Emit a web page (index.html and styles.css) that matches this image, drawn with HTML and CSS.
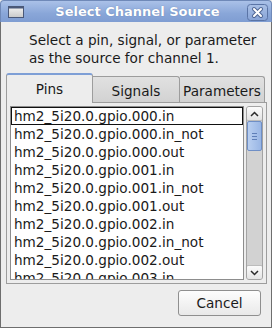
FILE: index.html
```html
<!doctype html>
<html>
<head>
<meta charset="utf-8">
<title>Select Channel Source</title>
<link rel="stylesheet" href="styles.css">
</head>
<body>
<div class="window">
	<div class="titlebar">
		<svg class="win_icon" width="16" height="12" viewBox="0 0 16 12">
			<defs>
				<linearGradient id="ig" x1="0" y1="0" x2="0" y2="1">
					<stop offset="0" stop-color="#f4f4f4"/>
					<stop offset="1" stop-color="#c9c9c9"/>
				</linearGradient>
			</defs>
			<rect x="0.5" y="0.5" width="15" height="11" fill="url(#ig)" stroke="#4a5878"/>
			<rect x="1" y="1" width="14" height="1.5" fill="#4a5878"/>
		</svg>
		<div class="title">Select Channel Source</div>
		<svg class="close" width="21" height="17" viewBox="0 0 21 17">
			<defs>
				<linearGradient id="cg" x1="0" y1="0" x2="0" y2="1">
					<stop offset="0" stop-color="#a9c0e6"/>
					<stop offset="1" stop-color="#87a3d6"/>
				</linearGradient>
			</defs>
			<rect x="0.5" y="0.5" width="20" height="16" rx="3" fill="url(#cg)" stroke="#5a74a6"/>
			<path d="M7 5 L14 12 M14 5 L7 12" stroke="#4f6694" stroke-width="4" stroke-linecap="round"/>
			<path d="M7 5 L14 12 M14 5 L7 12" stroke="#fff" stroke-width="2" stroke-linecap="round"/>
		</svg>
	</div>
	<div class="client">
		<div class="message">Select a pin, signal, or parameter<br>as the source for channel 1.</div>
		<div class="notebook">
			<div class="tabs">
				<div class="tab active">Pins</div>
				<div class="tab">Signals</div>
				<div class="tab">Parameters</div>
			</div>
			<div class="panel">
				<div class="list">
					<ul>
						<li class="focus">hm2_5i20.0.gpio.000.in</li>
						<li>hm2_5i20.0.gpio.000.in_not</li>
						<li>hm2_5i20.0.gpio.000.out</li>
						<li>hm2_5i20.0.gpio.001.in</li>
						<li>hm2_5i20.0.gpio.001.in_not</li>
						<li>hm2_5i20.0.gpio.001.out</li>
						<li>hm2_5i20.0.gpio.002.in</li>
						<li>hm2_5i20.0.gpio.002.in_not</li>
						<li>hm2_5i20.0.gpio.002.out</li>
						<li>hm2_5i20.0.gpio.003.in</li>
					</ul>
				</div>
				<div class="scrollbar">
					<div class="sb_btn">
						<svg width="9" height="6" viewBox="0 0 9 6"><path d="M1 5 L4.5 1.5 L8 5" fill="none" stroke="#2a2a2a" stroke-width="1.5"/></svg>
					</div>
					<div class="trough">
						<div class="thumb"><i></i><i></i><i></i></div>
					</div>
					<div class="sb_btn">
						<svg width="9" height="6" viewBox="0 0 9 6"><path d="M1 1 L4.5 4.5 L8 1" fill="none" stroke="#2a2a2a" stroke-width="1.5"/></svg>
					</div>
				</div>
			</div>
		</div>
		<div class="actions">
			<button class="btn">Cancel</button>
		</div>
	</div>
</div>
</body>
</html>
```

FILE: styles.css
```css
*{ margin:0; padding:0; list-style:none; box-sizing:border-box;}
body{ background:#ededed; font-family:"DejaVu Sans", Verdana, sans-serif; font-size:13.6px; color:#1a1a1a;}

.window{ width:272px; height:328px; display:flex; flex-direction:column;}
.titlebar{ height:22px; display:flex; align-items:center; padding:0 3px 0 7px; border-radius:4px 4px 0 0; background:linear-gradient(#aac1e8, #89a6d8 60%, #7f9dd2); border:1px solid #6f89b8; border-bottom:none;}
.win_icon{ display:block;}
.title{ flex:1; text-align:center; color:#fff; font-weight:bold; font-size:13px; padding-left:4px; text-shadow:0 0 1px #5b74a3;}
.close{ display:block; margin-top:1px;}

.client{ flex:1; display:flex; flex-direction:column; border:1px solid #6e6e6e; border-top:none; background:#ededed;}
.message{ padding:9px 0 0 28px; line-height:18px; height:46px;}

.notebook{ margin:5px 4px 0 5px;}
.tabs{ display:flex; align-items:flex-end; height:29px;}
.tab{ width:87px; height:26px; display:flex; align-items:center; justify-content:center; padding-top:3px; border:1px solid #9d9d9d; border-bottom:none; border-left:none; background:linear-gradient(#e1e1e1, #d2d2d2); border-radius:0 3px 0 0;}
.tab.active{ height:30px; padding-top:0; border-left:1px solid #9d9d9d; border-top:2px solid #7e9fd6; background:#ededed; border-radius:3px 3px 0 0; position:relative; z-index:1; margin-bottom:-1px;}
.tab:last-child{ width:85px;}

.panel{ height:182px; border:1px solid #9d9d9d; padding:3px; display:flex; background:#ededed;}
.list{ flex:1; background:#fff; border:1px solid #8d8d8d; overflow:hidden;}
.list li{ height:18px; line-height:18px; padding-left:3px; white-space:nowrap; color:#1a1a1a;}
.list li.focus{ outline:1px solid #111; outline-offset:-1px;}

.scrollbar{ width:17px; margin-left:2px; display:flex; flex-direction:column; border:1px solid #a3a3a3; border-radius:3px; background:#d2d2d2; overflow:hidden;}
.sb_btn{ height:15px; display:flex; align-items:center; justify-content:center; background:linear-gradient(#fbfbfb, #e4e4e4); border-radius:2px; border:1px solid #bcbcbc; margin:-1px;}
.trough{ flex:1;}
.thumb{ height:30px; margin-top:1px; border:1px solid #6f8fc6; border-radius:2px; background:linear-gradient(90deg, #b9cff0, #99b6e5); display:flex; flex-direction:column; align-items:center; justify-content:center; gap:2px;}
.thumb i{ display:block; width:5px; height:1px; background:#5f7fb8;}

.actions{ display:flex; justify-content:flex-end; padding:6px 10px 0 0;}
.btn{ width:83px; height:26px; font-family:"DejaVu Sans", Verdana, sans-serif; font-size:13.6px; color:#1a1a1a; border:1px solid #8f8f8f; border-radius:3px; background:linear-gradient(#fdfdfd, #e9e9e9);}
```
